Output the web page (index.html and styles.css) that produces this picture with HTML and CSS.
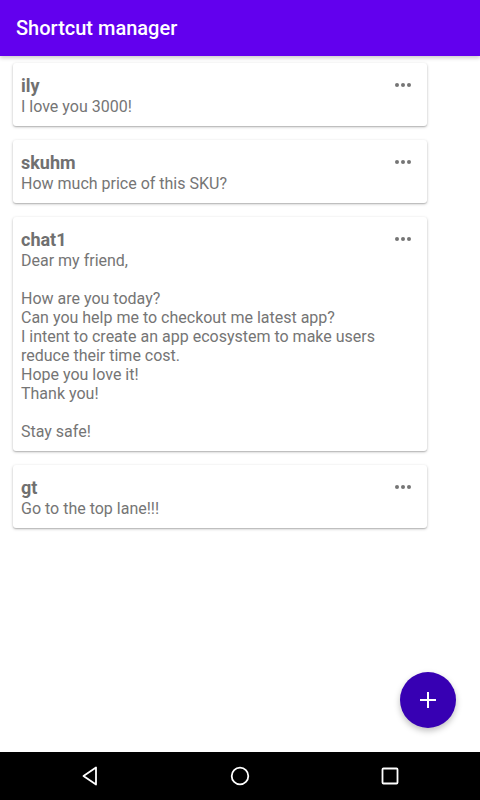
FILE: index.html
```html
<!DOCTYPE html>
<html lang="en">
  <head>
    <meta charset="UTF-8" />
    <meta name="viewport" content="width=device-width, initial-scale=1.0" />
    <title>Shortcut manager</title>
    <link rel="stylesheet" href="styles.css">
  </head>
  <body>
    <header class="app-bar">
      <h1>Shortcut manager</h1>
    </header>

    <main class="shortcut-list">
      <div class="card">
        <div class="card-head">
          <span class="card-title">ily</span>
          <span class="more"><i></i><i></i><i></i></span>
        </div>
        <p class="card-text">I love you 3000!</p>
      </div>

      <div class="card">
        <div class="card-head">
          <span class="card-title">skuhm</span>
          <span class="more"><i></i><i></i><i></i></span>
        </div>
        <p class="card-text">How much price of this SKU?</p>
      </div>

      <div class="card">
        <div class="card-head">
          <span class="card-title">chat1</span>
          <span class="more"><i></i><i></i><i></i></span>
        </div>
        <p class="card-text">Dear my friend,

How are you today?
Can you help me to checkout me latest app?
I intent to create an app ecosystem to make users reduce their time cost.
Hope you love it!
Thank you!

Stay safe!</p>
      </div>

      <div class="card">
        <div class="card-head">
          <span class="card-title">gt</span>
          <span class="more"><i></i><i></i><i></i></span>
        </div>
        <p class="card-text">Go to the top lane!!!</p>
      </div>
    </main>

    <button class="fab" aria-label="Add">
      <svg width="18" height="18" viewBox="0 0 18 18">
        <path d="M9 1v16M1 9h16" stroke="#fff" stroke-width="2" fill="none" />
      </svg>
    </button>

    <nav class="nav-bar">
      <svg width="20" height="20" viewBox="0 0 20 20">
        <path d="M16 1.5v17L3.5 10z" stroke="#fff" stroke-width="1.8" fill="none" stroke-linejoin="round" />
      </svg>
      <svg width="20" height="20" viewBox="0 0 20 20">
        <circle cx="10" cy="10" r="8.3" stroke="#fff" stroke-width="1.8" fill="none" />
      </svg>
      <svg width="20" height="20" viewBox="0 0 20 20">
        <rect x="2.5" y="2.5" width="15" height="15" rx="1" stroke="#fff" stroke-width="1.8" fill="none" />
      </svg>
    </nav>
  </body>
</html>
```

FILE: styles.css
```css
body {
  margin: 0;
  height: 800px;
  font-family: Roboto, "Noto Sans", sans-serif;
  background-color: #fff;
  position: relative;
  overflow: hidden;
}

.app-bar {
  height: 56px;
  background-color: #6200ee;
  display: flex;
  align-items: center;
  padding: 0 16px;
  box-shadow: 0 2px 4px rgba(0, 0, 0, 0.2);
}

.app-bar h1 {
  margin: 0;
  color: #fff;
  font-size: 20px;
  font-weight: 500;
}

.shortcut-list {
  display: flex;
  flex-direction: column;
  gap: 14px;
  padding: 7px 53px 0 13px;
}

.card {
  background-color: #fff;
  border-radius: 3px;
  padding: 10px 16px 10px 8px;
  box-shadow: 0 1px 3px rgba(0, 0, 0, 0.25), 0 1px 1px rgba(0, 0, 0, 0.12);
}

.card-head {
  display: flex;
  justify-content: space-between;
  align-items: center;
  height: 24px;
}

.card-title {
  font-size: 18px;
  font-weight: bold;
  color: #707070;
}

.more {
  display: flex;
  gap: 2px;
  margin-top: -1px;
}

.more i {
  width: 4px;
  height: 4px;
  border-radius: 50%;
  background-color: #757575;
}

.card-text {
  margin: 0;
  font-size: 16px;
  line-height: 19px;
  color: #757575;
  white-space: pre-line;
}

.fab {
  position: absolute;
  left: 400px;
  top: 672px;
  width: 56px;
  height: 56px;
  border-radius: 50%;
  border: none;
  background-color: #3700b3;
  display: flex;
  align-items: center;
  justify-content: center;
  box-shadow: 0 3px 6px rgba(0, 0, 0, 0.25);
  padding: 0;
}

.nav-bar {
  position: absolute;
  left: 0;
  right: 0;
  bottom: 0;
  height: 48px;
  background-color: #000;
  display: flex;
  justify-content: space-between;
  align-items: center;
  padding: 0 80px;
}
```
